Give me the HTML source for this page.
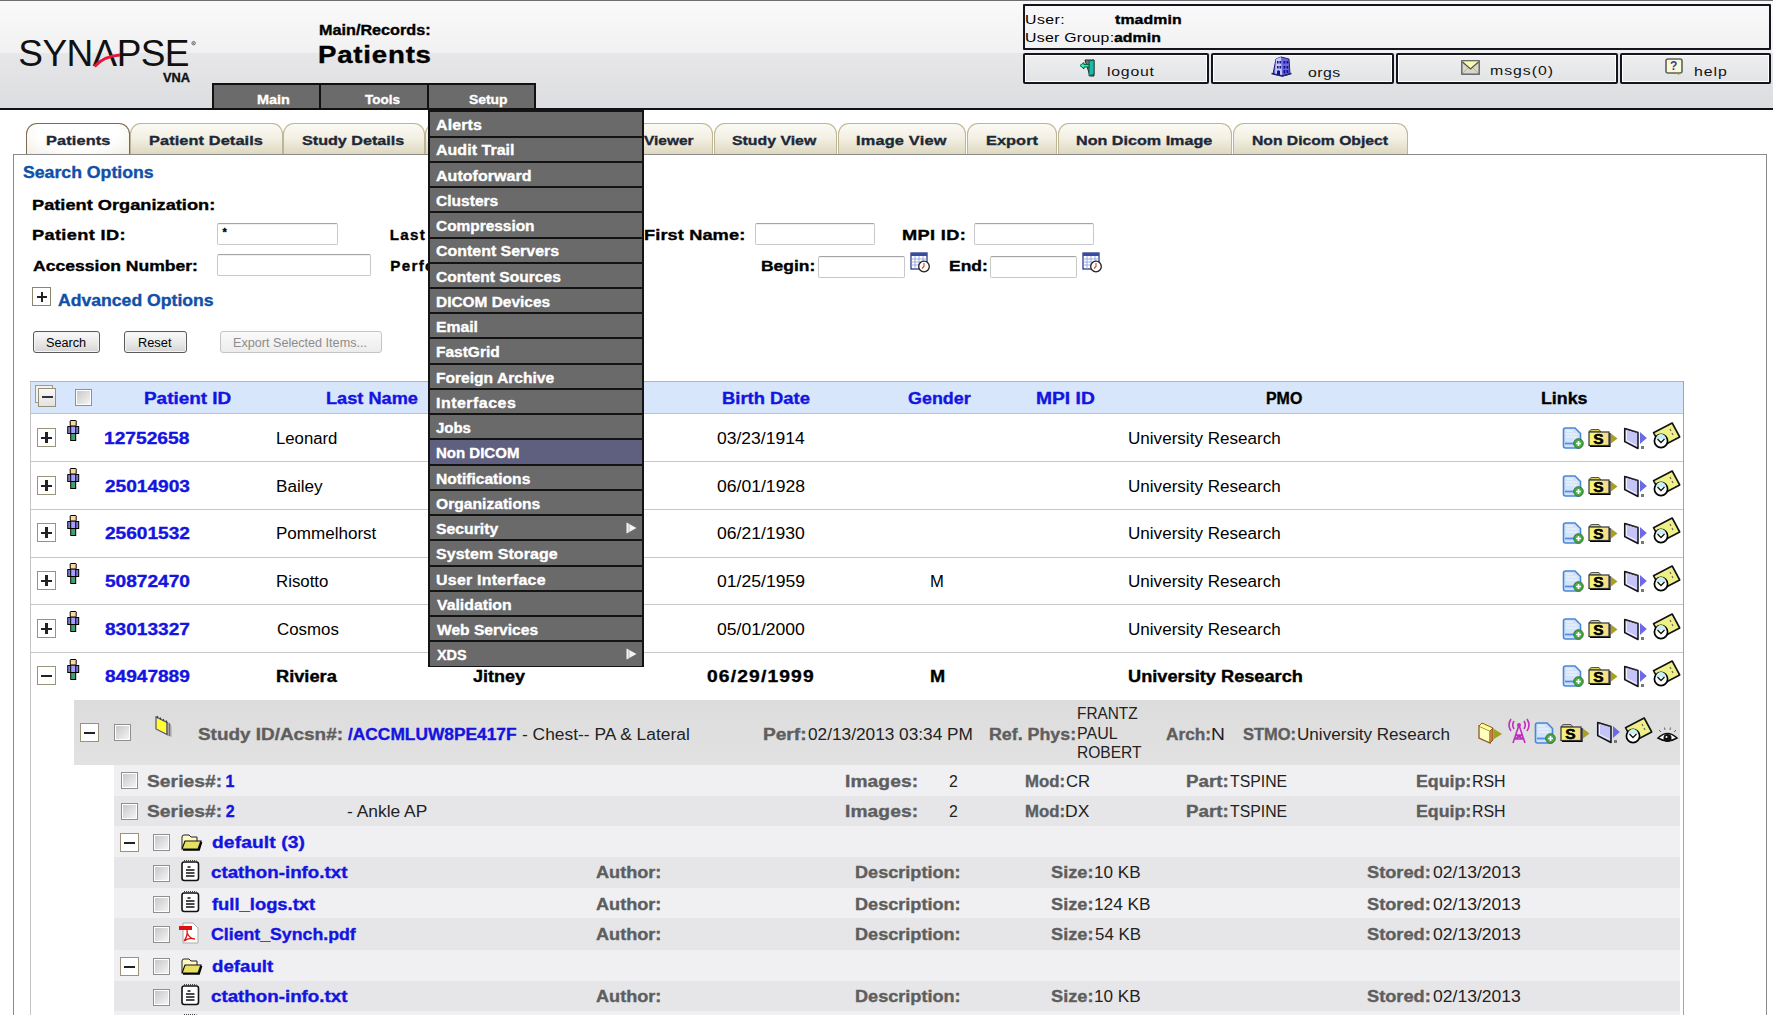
<!DOCTYPE html><html><head><meta charset="utf-8"><style>
html,body{margin:0;padding:0}
body{width:1781px;height:1015px;overflow:hidden;position:relative;background:#fff;font-family:"Liberation Sans",sans-serif}
.t{position:absolute;white-space:pre;line-height:1}
.r{position:absolute;box-sizing:border-box}
svg.r{overflow:visible}
</style></head><body>

<div class="r" style="left:0px;top:0px;width:1773px;height:109px;background:linear-gradient(#fafafa 0px,#f1f1f2 53px,#e7e7e9 53px,#dcdde0 108px)"></div>
<div class="r" style="left:0px;top:0px;width:1773px;height:1px;background:#6e6e6e"></div>
<div class="r" style="left:0px;top:108px;width:1773px;height:2px;background:#111"></div>
<svg class="r" style="left:0;top:0" width="240" height="100" viewBox="0 0 240 100"><text x="18.3" y="66.2" font-family="Liberation Sans" font-size="37" fill="#111" letter-spacing="-0.6">SYN&#923;PSE</text><path d="M94.5 66.5 Q104 56 120 55" stroke="#e8173a" stroke-width="3.2" fill="none"/><circle cx="193.6" cy="43.2" r="1.7" fill="none" stroke="#444" stroke-width="0.8"/><circle cx="193.6" cy="43.2" r="0.6" fill="#444"/></svg>
<div class="t" style="left:162.60px;top:72px;font-size:12.3px;font-weight:bold;-webkit-text-stroke:0.35px #111;color:#111;letter-spacing:0.000px;transform:scaleX(1.0449);transform-origin:0 0;">VNA</div>
<div class="t" style="left:318.91px;top:23px;font-size:14.3px;font-weight:bold;-webkit-text-stroke:0.35px #000;color:#000;letter-spacing:0.000px;transform:scaleX(1.1330);transform-origin:0 0;">Main/Records:</div>
<div class="t" style="left:318.14px;top:44px;font-size:23px;font-weight:bold;-webkit-text-stroke:0.35px #000;color:#000;letter-spacing:0.667px;transform:scaleX(1.2000);transform-origin:0 0;">Patients</div>
<div class="r" style="left:212px;top:83px;width:109px;height:27px;background:#6b6b6b;border:2px solid #111"></div>
<div class="t" style="left:256.62px;top:93px;font-size:13.2px;font-weight:bold;-webkit-text-stroke:0.35px #fff;color:#fff;letter-spacing:-0.000px;transform:scaleX(1.0958);transform-origin:0 0;">Main</div>
<div class="r" style="left:319px;top:83px;width:110px;height:27px;background:#6b6b6b;border:2px solid #111"></div>
<div class="t" style="left:364.86px;top:93px;font-size:13.2px;font-weight:bold;-webkit-text-stroke:0.35px #fff;color:#fff;letter-spacing:0.000px;transform:scaleX(1.0230);transform-origin:0 0;">Tools</div>
<div class="r" style="left:427px;top:83px;width:109px;height:27px;background:#6b6b6b;border:2px solid #111"></div>
<div class="t" style="left:468.98px;top:93px;font-size:13.2px;font-weight:bold;-webkit-text-stroke:0.35px #fff;color:#fff;letter-spacing:0.000px;transform:scaleX(1.0521);transform-origin:0 0;">Setup</div>
<div class="r" style="left:1023px;top:4px;width:748px;height:46px;border:2px solid #151520;border-radius:1px"></div>
<div class="t" style="left:1024.77px;top:13px;font-size:13.2px;color:#000;letter-spacing:0.374px;transform:scaleX(1.2000);transform-origin:0 0;">User:</div>
<div class="t" style="left:1114.80px;top:13px;font-size:13.2px;font-weight:bold;-webkit-text-stroke:0.35px #000;color:#000;letter-spacing:0.116px;transform:scaleX(1.2000);transform-origin:0 0;">tmadmin</div>
<div class="t" style="left:1024.77px;top:31px;font-size:13.2px;color:#000;letter-spacing:0.242px;transform:scaleX(1.2000);transform-origin:0 0;">User Group:</div>
<div class="t" style="left:1114.02px;top:31px;font-size:13.2px;font-weight:bold;-webkit-text-stroke:0.35px #000;color:#000;letter-spacing:0.058px;transform:scaleX(1.2000);transform-origin:0 0;">admin</div>
<div class="r" style="left:1023px;top:53px;width:186px;height:31px;border:2px solid #151520;border-radius:2px;background:linear-gradient(#efeff0,#e2e3e5);box-shadow:inset 0 0 0 1px #fff"></div>
<div class="r" style="left:1211px;top:53px;width:183px;height:31px;border:2px solid #151520;border-radius:2px;background:linear-gradient(#efeff0,#e2e3e5);box-shadow:inset 0 0 0 1px #fff"></div>
<div class="r" style="left:1396px;top:53px;width:222px;height:31px;border:2px solid #151520;border-radius:2px;background:linear-gradient(#efeff0,#e2e3e5);box-shadow:inset 0 0 0 1px #fff"></div>
<div class="r" style="left:1620px;top:53px;width:151px;height:31px;border:2px solid #151520;border-radius:2px;background:linear-gradient(#efeff0,#e2e3e5);box-shadow:inset 0 0 0 1px #fff"></div>
<div class="t" style="left:1107.13px;top:65px;font-size:13.2px;color:#111;letter-spacing:0.637px;transform:scaleX(1.2000);transform-origin:0 0;">logout</div>
<div class="t" style="left:1307.93px;top:66px;font-size:13.2px;color:#111;letter-spacing:0.366px;transform:scaleX(1.2000);transform-origin:0 0;">orgs</div>
<div class="t" style="left:1489.93px;top:64px;font-size:13.2px;color:#111;letter-spacing:0.811px;transform:scaleX(1.2000);transform-origin:0 0;">msgs(0)</div>
<div class="t" style="left:1693.89px;top:65px;font-size:13.2px;color:#111;letter-spacing:0.779px;transform:scaleX(1.2000);transform-origin:0 0;">help</div>
<div class="r" style="left:13px;top:154px;width:1754px;height:900px;border:1px solid #8a8a8a;border-bottom:none;background:#fff"></div>
<div class="r" style="left:26px;top:123px;width:104px;height:31px;border:1.5px solid #7d6a55;border-bottom:none;border-radius:11px 11px 0 0;background:radial-gradient(ellipse at 50% 30%,#ffffff 55%,#f1eee4 100%)"></div>
<div class="t" style="left:45.70px;top:134px;font-size:13.6px;font-weight:bold;-webkit-text-stroke:0.35px #1c2838;color:#1c2838;letter-spacing:0.115px;transform:scaleX(1.2000);transform-origin:0 0;">Patients</div>
<div class="r" style="left:130px;top:123px;width:153px;height:31px;border:1.5px solid #bdb593;border-bottom:none;border-radius:11px 11px 0 0;background:linear-gradient(#fbfaf4 0%,#f2efe2 50%,#ddd8bf 100%)"></div>
<div class="t" style="left:149.10px;top:134px;font-size:13.6px;font-weight:bold;-webkit-text-stroke:0.35px #1c2838;color:#1c2838;letter-spacing:0.090px;transform:scaleX(1.2000);transform-origin:0 0;">Patient Details</div>
<div class="r" style="left:283px;top:123px;width:142px;height:31px;border:1.5px solid #bdb593;border-bottom:none;border-radius:11px 11px 0 0;background:linear-gradient(#fbfaf4 0%,#f2efe2 50%,#ddd8bf 100%)"></div>
<div class="t" style="left:301.52px;top:134px;font-size:13.6px;font-weight:bold;-webkit-text-stroke:0.35px #1c2838;color:#1c2838;letter-spacing:0.000px;transform:scaleX(1.1877);transform-origin:0 0;">Study Details</div>
<div class="r" style="left:425px;top:123px;width:151px;height:31px;border:1.5px solid #bdb593;border-bottom:none;border-radius:11px 11px 0 0;background:linear-gradient(#fbfaf4 0%,#f2efe2 50%,#ddd8bf 100%)"></div>
<div class="t" style="left:444.51px;top:134px;font-size:13.6px;font-weight:bold;-webkit-text-stroke:0.35px #1c2838;color:#1c2838;letter-spacing:0.585px;transform:scaleX(1.2000);transform-origin:0 0;">Series Details</div>
<div class="r" style="left:576px;top:123px;width:137px;height:31px;border:1.5px solid #bdb593;border-bottom:none;border-radius:11px 11px 0 0;background:linear-gradient(#fbfaf4 0%,#f2efe2 50%,#ddd8bf 100%)"></div>
<div class="t" style="left:594.96px;top:134px;font-size:13.6px;font-weight:bold;-webkit-text-stroke:0.35px #1c2838;color:#1c2838;letter-spacing:0.000px;transform:scaleX(1.1370);transform-origin:0 0;">Image Viewer</div>
<div class="r" style="left:714px;top:123px;width:123px;height:31px;border:1.5px solid #bdb593;border-bottom:none;border-radius:11px 11px 0 0;background:linear-gradient(#fbfaf4 0%,#f2efe2 50%,#ddd8bf 100%)"></div>
<div class="t" style="left:732.12px;top:134px;font-size:13.6px;font-weight:bold;-webkit-text-stroke:0.35px #1c2838;color:#1c2838;letter-spacing:0.000px;transform:scaleX(1.1653);transform-origin:0 0;">Study View</div>
<div class="r" style="left:838px;top:123px;width:128px;height:31px;border:1.5px solid #bdb593;border-bottom:none;border-radius:11px 11px 0 0;background:linear-gradient(#fbfaf4 0%,#f2efe2 50%,#ddd8bf 100%)"></div>
<div class="t" style="left:855.90px;top:134px;font-size:13.6px;font-weight:bold;-webkit-text-stroke:0.35px #1c2838;color:#1c2838;letter-spacing:0.165px;transform:scaleX(1.2000);transform-origin:0 0;">Image View</div>
<div class="r" style="left:967px;top:123px;width:90px;height:31px;border:1.5px solid #bdb593;border-bottom:none;border-radius:11px 11px 0 0;background:linear-gradient(#fbfaf4 0%,#f2efe2 50%,#ddd8bf 100%)"></div>
<div class="t" style="left:985.70px;top:134px;font-size:13.6px;font-weight:bold;-webkit-text-stroke:0.35px #1c2838;color:#1c2838;letter-spacing:0.052px;transform:scaleX(1.2000);transform-origin:0 0;">Export</div>
<div class="r" style="left:1058px;top:123px;width:174px;height:31px;border:1.5px solid #bdb593;border-bottom:none;border-radius:11px 11px 0 0;background:linear-gradient(#fbfaf4 0%,#f2efe2 50%,#ddd8bf 100%)"></div>
<div class="t" style="left:1076.41px;top:134px;font-size:13.6px;font-weight:bold;-webkit-text-stroke:0.35px #1c2838;color:#1c2838;letter-spacing:0.000px;transform:scaleX(1.1869);transform-origin:0 0;">Non Dicom Image</div>
<div class="r" style="left:1233px;top:123px;width:175px;height:31px;border:1.5px solid #bdb593;border-bottom:none;border-radius:11px 11px 0 0;background:linear-gradient(#fbfaf4 0%,#f2efe2 50%,#ddd8bf 100%)"></div>
<div class="t" style="left:1251.94px;top:134px;font-size:13.6px;font-weight:bold;-webkit-text-stroke:0.35px #1c2838;color:#1c2838;letter-spacing:0.000px;transform:scaleX(1.1542);transform-origin:0 0;">Non Dicom Object</div>
<div class="t" style="left:22.97px;top:165px;font-size:16px;font-weight:bold;-webkit-text-stroke:0.35px #1050a8;color:#1050a8;letter-spacing:0.000px;transform:scaleX(1.1048);transform-origin:0 0;">Search Options</div>
<div class="t" style="left:32.07px;top:197px;font-size:15.2px;font-weight:bold;-webkit-text-stroke:0.35px #000;color:#000;letter-spacing:0.000px;transform:scaleX(1.1997);transform-origin:0 0;">Patient Organization:</div>
<div class="t" style="left:32.07px;top:227px;font-size:15.2px;font-weight:bold;-webkit-text-stroke:0.35px #000;color:#000;letter-spacing:0.281px;transform:scaleX(1.2000);transform-origin:0 0;">Patient ID:</div>
<div class="t" style="left:32.86px;top:258px;font-size:15.2px;font-weight:bold;-webkit-text-stroke:0.35px #000;color:#000;letter-spacing:0.000px;transform:scaleX(1.1565);transform-origin:0 0;">Accession Number:</div>
<div class="t" style="left:389.67px;top:227px;font-size:15.2px;font-weight:bold;-webkit-text-stroke:0.35px #000;color:#000;letter-spacing:1.300px;">Last Name:</div>
<div class="t" style="left:390.37px;top:258px;font-size:15.2px;font-weight:bold;-webkit-text-stroke:0.35px #000;color:#000;letter-spacing:1.300px;">Performed:</div>
<div class="t" style="left:644.17px;top:227px;font-size:15.2px;font-weight:bold;-webkit-text-stroke:0.35px #000;color:#000;letter-spacing:0.079px;transform:scaleX(1.2000);transform-origin:0 0;">First Name:</div>
<div class="t" style="left:902.47px;top:227px;font-size:15.2px;font-weight:bold;-webkit-text-stroke:0.35px #000;color:#000;letter-spacing:0.288px;transform:scaleX(1.2000);transform-origin:0 0;">MPI ID:</div>
<div class="t" style="left:761.32px;top:258px;font-size:15.2px;font-weight:bold;-webkit-text-stroke:0.35px #000;color:#000;letter-spacing:0.000px;transform:scaleX(1.1495);transform-origin:0 0;">Begin:</div>
<div class="t" style="left:948.82px;top:258px;font-size:15.2px;font-weight:bold;-webkit-text-stroke:0.35px #000;color:#000;letter-spacing:0.000px;transform:scaleX(1.1511);transform-origin:0 0;">End:</div>
<div class="r" style="left:217px;top:223px;width:121px;height:22px;border:1px solid #c8c8c8;border-top-color:#a4a4a4;border-radius:2px;background:#fff;box-shadow:inset 0 1px 0 #f0f0f0"></div>
<div class="t" style="left:222.47px;top:227px;font-size:11px;font-weight:bold;-webkit-text-stroke:0.35px #000;color:#000;letter-spacing:0.000px;">*</div>
<div class="r" style="left:217px;top:254px;width:154px;height:22px;border:1px solid #c8c8c8;border-top-color:#a4a4a4;border-radius:2px;background:#fff;box-shadow:inset 0 1px 0 #f0f0f0"></div>
<div class="r" style="left:755px;top:223px;width:120px;height:22px;border:1px solid #c8c8c8;border-top-color:#a4a4a4;border-radius:2px;background:#fff;box-shadow:inset 0 1px 0 #f0f0f0"></div>
<div class="r" style="left:974px;top:223px;width:120px;height:22px;border:1px solid #c8c8c8;border-top-color:#a4a4a4;border-radius:2px;background:#fff;box-shadow:inset 0 1px 0 #f0f0f0"></div>
<div class="r" style="left:818px;top:256px;width:87px;height:22px;border:1px solid #c8c8c8;border-top-color:#a4a4a4;border-radius:2px;background:#fff;box-shadow:inset 0 1px 0 #f0f0f0"></div>
<div class="r" style="left:990px;top:256px;width:87px;height:22px;border:1px solid #c8c8c8;border-top-color:#a4a4a4;border-radius:2px;background:#fff;box-shadow:inset 0 1px 0 #f0f0f0"></div>
<div class="r" style="left:32px;top:287px;width:19px;height:19px;border:1px solid #8e8570;background:#fff"></div>
<div class="r" style="left:37px;top:295.5px;width:10px;height:2.6px;background:#222"></div>
<div class="r" style="left:40.7px;top:291.8px;width:2.6px;height:10px;background:#222"></div>
<div class="t" style="left:58.16px;top:293px;font-size:16px;font-weight:bold;-webkit-text-stroke:0.35px #1050a8;color:#1050a8;letter-spacing:0.000px;transform:scaleX(1.1007);transform-origin:0 0;">Advanced Options</div>
<div class="r" style="left:33px;top:331px;width:67px;height:22px;border:1px solid #5a5a5a;border-radius:3px;background:linear-gradient(#fbfbfb,#e6e6e6 60%,#d4d4d4);box-shadow:inset 0 0 0 1px #f4f4f4"></div>
<div class="t" style="left:46.13px;top:337px;font-size:12.5px;color:#000;letter-spacing:-0.000px;transform:scaleX(1.0118);transform-origin:0 0;">Search</div>
<div class="r" style="left:124px;top:331px;width:63px;height:22px;border:1px solid #5a5a5a;border-radius:3px;background:linear-gradient(#fbfbfb,#e6e6e6 60%,#d4d4d4);box-shadow:inset 0 0 0 1px #f4f4f4"></div>
<div class="t" style="left:138.44px;top:337px;font-size:12.5px;color:#000;letter-spacing:0.000px;transform:scaleX(1.0244);transform-origin:0 0;">Reset</div>
<div class="r" style="left:220px;top:331px;width:162px;height:22px;border:1px solid #c4c4c4;border-radius:3px;background:linear-gradient(#fafafa,#ececec)"></div>
<div class="t" style="left:233.46px;top:337px;font-size:12.5px;color:#8c8c8c;letter-spacing:0.000px;transform:scaleX(1.0097);transform-origin:0 0;">Export Selected Items...</div>
<svg class="r" style="left:910px;top:252px" width="21" height="21" viewBox="0 0 21 21"><rect x="1" y="1" width="16" height="16" fill="#fff" stroke="#2a3a8a" stroke-width="1.3"/><rect x="1" y="1" width="16" height="3" fill="#3a4aa0"/><g stroke="#8a9ad8" stroke-width="0.8"><line x1="1" y1="7" x2="17" y2="7"/><line x1="1" y1="10" x2="17" y2="10"/><line x1="1" y1="13" x2="17" y2="13"/><line x1="5" y1="4" x2="5" y2="17"/><line x1="9" y1="4" x2="9" y2="17"/><line x1="13" y1="4" x2="13" y2="17"/></g><circle cx="14" cy="14.5" r="5.3" fill="#fff" stroke="#222" stroke-width="1.3"/><path d="M14 11 L14 14.5 L12 16.5" stroke="#d04020" stroke-width="1.1" fill="none"/></svg>
<svg class="r" style="left:1082px;top:252px" width="21" height="21" viewBox="0 0 21 21"><rect x="1" y="1" width="16" height="16" fill="#fff" stroke="#2a3a8a" stroke-width="1.3"/><rect x="1" y="1" width="16" height="3" fill="#3a4aa0"/><g stroke="#8a9ad8" stroke-width="0.8"><line x1="1" y1="7" x2="17" y2="7"/><line x1="1" y1="10" x2="17" y2="10"/><line x1="1" y1="13" x2="17" y2="13"/><line x1="5" y1="4" x2="5" y2="17"/><line x1="9" y1="4" x2="9" y2="17"/><line x1="13" y1="4" x2="13" y2="17"/></g><circle cx="14" cy="14.5" r="5.3" fill="#fff" stroke="#222" stroke-width="1.3"/><path d="M14 11 L14 14.5 L12 16.5" stroke="#d04020" stroke-width="1.1" fill="none"/></svg>
<div class="r" style="left:30px;top:381px;width:1654px;height:640px;border:1px solid #c4c4c4;border-top-color:#b4b4b4;border-right-color:#a4a4a4;border-bottom:none;background:#fff"></div>
<div class="r" style="left:31px;top:382px;width:1652px;height:32px;background:#d7e6fa;border-bottom:1px solid #b9c4d2"></div>
<div class="r" style="left:35px;top:385px;width:18px;height:18px;border:1px solid #a09a88;background:#f2f2ee"></div>
<div class="r" style="left:38px;top:388px;width:18px;height:19px;border:1px solid #978f78;background:linear-gradient(#f8f8f8,#e2e2e2)"></div>
<div class="r" style="left:41.5px;top:396px;width:11px;height:2.2px;background:#333"></div>
<div class="r" style="left:75px;top:389px;width:17px;height:17px;border:1px solid #8f8f8f;background:#fff"></div>
<div class="r" style="left:77px;top:391px;width:13px;height:13px;background:linear-gradient(135deg,#c8c8c8,#f4f4f4)"></div>
<div class="t" style="left:143.52px;top:391px;font-size:16px;font-weight:bold;-webkit-text-stroke:0.35px #1414e0;color:#1414e0;letter-spacing:0.000px;transform:scaleX(1.1827);transform-origin:0 0;">Patient ID</div>
<div class="t" style="left:326.37px;top:391px;font-size:16px;font-weight:bold;-webkit-text-stroke:0.35px #1414e0;color:#1414e0;letter-spacing:0.000px;transform:scaleX(1.1359);transform-origin:0 0;">Last Name</div>
<div class="t" style="left:722.46px;top:391px;font-size:16px;font-weight:bold;-webkit-text-stroke:0.35px #1414e0;color:#1414e0;letter-spacing:0.000px;transform:scaleX(1.1505);transform-origin:0 0;">Birth Date</div>
<div class="t" style="left:908.28px;top:391px;font-size:16px;font-weight:bold;-webkit-text-stroke:0.35px #1414e0;color:#1414e0;letter-spacing:0.000px;transform:scaleX(1.1186);transform-origin:0 0;">Gender</div>
<div class="t" style="left:1036.00px;top:391px;font-size:16px;font-weight:bold;-webkit-text-stroke:0.35px #1414e0;color:#1414e0;letter-spacing:0.026px;transform:scaleX(1.2000);transform-origin:0 0;">MPI ID</div>
<div class="t" style="left:1266.43px;top:391px;font-size:16px;font-weight:bold;-webkit-text-stroke:0.35px #000;color:#000;letter-spacing:0.000px;transform:scaleX(0.9948);transform-origin:0 0;">PMO</div>
<div class="t" style="left:1541.20px;top:391px;font-size:16px;font-weight:bold;-webkit-text-stroke:0.35px #000;color:#000;letter-spacing:0.000px;transform:scaleX(1.1114);transform-origin:0 0;">Links</div>
<div class="r" style="left:31px;top:461px;width:1652px;height:1px;background:#c8c8c8"></div>
<div class="r" style="left:37px;top:428px;width:19px;height:19px;border:1px solid #9b927c;background:#fff"></div>
<div class="r" style="left:41px;top:436.5px;width:11px;height:2.2px;background:#222"></div>
<div class="r" style="left:45.4px;top:432px;width:2.2px;height:11px;background:#222"></div>
<svg class="r" style="left:67px;top:419px" width="13" height="23" viewBox="0 0 13 23"><rect x="0.2" y="7" width="12" height="8" rx="0.6" fill="#000"/><rect x="1.2" y="8" width="2" height="6" fill="#8078d8"/><rect x="9.2" y="8" width="2" height="6" fill="#8078d8"/><rect x="4.2" y="7.3" width="4" height="6.7" fill="#a8a0f8"/><rect x="3.2" y="14.5" width="6" height="7.5" fill="#000"/><rect x="4.2" y="15" width="4" height="6" fill="#40a070"/><rect x="2.7" y="1" width="7" height="6.5" rx="1.5" fill="#000"/><rect x="3.7" y="2" width="5" height="4.5" fill="#f8d8a0"/></svg>
<div class="t" style="left:104.00px;top:431px;font-size:16px;font-weight:bold;-webkit-text-stroke:0.35px #1414e0;color:#1414e0;letter-spacing:-0.000px;transform:scaleX(1.1983);transform-origin:0 0;">12752658</div>
<div class="t" style="left:276.12px;top:431px;font-size:16px;color:#000;letter-spacing:0.000px;transform:scaleX(1.0461);transform-origin:0 0;">Leonard</div>
<div class="t" style="left:716.50px;top:431px;font-size:16px;color:#000;letter-spacing:0.000px;transform:scaleX(1.0949);transform-origin:0 0;">03/23/1914</div>
<div class="t" style="left:1127.98px;top:431px;font-size:16px;color:#000;letter-spacing:0.000px;transform:scaleX(1.0666);transform-origin:0 0;">University Research</div>
<svg class="r" style="left:1562px;top:427px" width="22" height="22" viewBox="0 0 22 22"><path d="M1.5 3 Q1.5 1 3.5 1 H13 L18.5 6.5 V19.5 Q18.5 21 17 21 H3.5 Q1.5 21 1.5 19 Z" fill="#d2e2f8" stroke="#4a86d8" stroke-width="1.6"/><path d="M4 4 H11 M4 7 H15 M4 10 H15" stroke="#e8f0fc" stroke-width="1.6"/><path d="M3 16.5 H13" stroke="#4a90e8" stroke-width="1.8"/><circle cx="16.5" cy="16.5" r="4.8" fill="#48a848" stroke="#2a702a" stroke-width="0.9"/><path d="M14 16.5 H19 M16.5 14 V19" stroke="#fff" stroke-width="1.7"/></svg>
<svg class="r" style="left:1588px;top:428px" width="30" height="20" viewBox="0 0 30 20"><defs><linearGradient id="sg" x1="0" x2="1"><stop offset="0.4" stop-color="#f6f27a"/><stop offset="1" stop-color="#f6d890"/></linearGradient></defs><path d="M1.5 4 Q1.5 1.5 4 1.5 H11 L13 4 Z" fill="#d8d060" stroke="#555" stroke-width="1"/><rect x="1" y="4" width="20" height="13.5" fill="url(#sg)" stroke="#333" stroke-width="1.2"/><path d="M2 18.5 H22 V5" stroke="#000" stroke-width="1.2" fill="none"/><text x="5.2" y="16.3" font-family="Liberation Sans" font-weight="bold" font-size="15.5" fill="#000" stroke="#000" stroke-width="0.6">S</text><path d="M23 5.5 L29.5 10.5 L23 15.5 Z" fill="#a8a020"/></svg>
<svg class="r" style="left:1623px;top:427px" width="25" height="23" viewBox="0 0 25 23"><path d="M1.7 1.4 L15 5.4 V21.5 L1.7 14.7 Z" fill="#c4c4f8" stroke="#111" stroke-width="1.5" stroke-linejoin="round"/><path d="M3 2 L14 5.3" stroke="#333" stroke-width="1.6" stroke-dasharray="1.5 1.5"/><path d="M3.5 4 V13.5 L13.5 18.5" stroke="#fff" stroke-width="0.8" fill="none"/><path d="M17 5 L23.8 11 L17 17 Z" fill="#6a6ae8"/><rect x="18" y="19" width="3" height="3" fill="#777"/></svg>
<svg class="r" style="left:1652px;top:421px" width="29" height="29" viewBox="0 0 29 29"><path d="M1.5 11.7 L20.2 2 L27.7 16 L9 25.7 Z" fill="#f0f088" stroke="#111" stroke-width="1.6" stroke-linejoin="round"/><path d="M18 8 L19 10 M20 12 L21 14" stroke="#666" stroke-width="1.2"/><circle cx="9" cy="20" r="6.6" fill="#fff" stroke="#000" stroke-width="1.7"/><path d="M4 18 A5 5 0 0 1 14 18 Z" fill="#c8f0f0"/><path d="M5.5 18 L9 21.5 L12.5 18" stroke="#111" stroke-width="1.3" fill="none"/></svg>
<div class="r" style="left:31px;top:509px;width:1652px;height:1px;background:#c8c8c8"></div>
<div class="r" style="left:37px;top:476px;width:19px;height:19px;border:1px solid #9b927c;background:#fff"></div>
<div class="r" style="left:41px;top:484.5px;width:11px;height:2.2px;background:#222"></div>
<div class="r" style="left:45.4px;top:480px;width:2.2px;height:11px;background:#222"></div>
<svg class="r" style="left:67px;top:467px" width="13" height="23" viewBox="0 0 13 23"><rect x="0.2" y="7" width="12" height="8" rx="0.6" fill="#000"/><rect x="1.2" y="8" width="2" height="6" fill="#8078d8"/><rect x="9.2" y="8" width="2" height="6" fill="#8078d8"/><rect x="4.2" y="7.3" width="4" height="6.7" fill="#a8a0f8"/><rect x="3.2" y="14.5" width="6" height="7.5" fill="#000"/><rect x="4.2" y="15" width="4" height="6" fill="#40a070"/><rect x="2.7" y="1" width="7" height="6.5" rx="1.5" fill="#000"/><rect x="3.7" y="2" width="5" height="4.5" fill="#f8d8a0"/></svg>
<div class="t" style="left:104.53px;top:479px;font-size:16px;font-weight:bold;-webkit-text-stroke:0.35px #1414e0;color:#1414e0;letter-spacing:0.000px;transform:scaleX(1.1922);transform-origin:0 0;">25014903</div>
<div class="t" style="left:276.09px;top:479px;font-size:16px;color:#000;letter-spacing:0.000px;transform:scaleX(1.0711);transform-origin:0 0;">Bailey</div>
<div class="t" style="left:716.50px;top:479px;font-size:16px;color:#000;letter-spacing:0.000px;transform:scaleX(1.0983);transform-origin:0 0;">06/01/1928</div>
<div class="t" style="left:1127.98px;top:479px;font-size:16px;color:#000;letter-spacing:0.000px;transform:scaleX(1.0666);transform-origin:0 0;">University Research</div>
<svg class="r" style="left:1562px;top:475px" width="22" height="22" viewBox="0 0 22 22"><path d="M1.5 3 Q1.5 1 3.5 1 H13 L18.5 6.5 V19.5 Q18.5 21 17 21 H3.5 Q1.5 21 1.5 19 Z" fill="#d2e2f8" stroke="#4a86d8" stroke-width="1.6"/><path d="M4 4 H11 M4 7 H15 M4 10 H15" stroke="#e8f0fc" stroke-width="1.6"/><path d="M3 16.5 H13" stroke="#4a90e8" stroke-width="1.8"/><circle cx="16.5" cy="16.5" r="4.8" fill="#48a848" stroke="#2a702a" stroke-width="0.9"/><path d="M14 16.5 H19 M16.5 14 V19" stroke="#fff" stroke-width="1.7"/></svg>
<svg class="r" style="left:1588px;top:476px" width="30" height="20" viewBox="0 0 30 20"><defs><linearGradient id="sg" x1="0" x2="1"><stop offset="0.4" stop-color="#f6f27a"/><stop offset="1" stop-color="#f6d890"/></linearGradient></defs><path d="M1.5 4 Q1.5 1.5 4 1.5 H11 L13 4 Z" fill="#d8d060" stroke="#555" stroke-width="1"/><rect x="1" y="4" width="20" height="13.5" fill="url(#sg)" stroke="#333" stroke-width="1.2"/><path d="M2 18.5 H22 V5" stroke="#000" stroke-width="1.2" fill="none"/><text x="5.2" y="16.3" font-family="Liberation Sans" font-weight="bold" font-size="15.5" fill="#000" stroke="#000" stroke-width="0.6">S</text><path d="M23 5.5 L29.5 10.5 L23 15.5 Z" fill="#a8a020"/></svg>
<svg class="r" style="left:1623px;top:475px" width="25" height="23" viewBox="0 0 25 23"><path d="M1.7 1.4 L15 5.4 V21.5 L1.7 14.7 Z" fill="#c4c4f8" stroke="#111" stroke-width="1.5" stroke-linejoin="round"/><path d="M3 2 L14 5.3" stroke="#333" stroke-width="1.6" stroke-dasharray="1.5 1.5"/><path d="M3.5 4 V13.5 L13.5 18.5" stroke="#fff" stroke-width="0.8" fill="none"/><path d="M17 5 L23.8 11 L17 17 Z" fill="#6a6ae8"/><rect x="18" y="19" width="3" height="3" fill="#777"/></svg>
<svg class="r" style="left:1652px;top:469px" width="29" height="29" viewBox="0 0 29 29"><path d="M1.5 11.7 L20.2 2 L27.7 16 L9 25.7 Z" fill="#f0f088" stroke="#111" stroke-width="1.6" stroke-linejoin="round"/><path d="M18 8 L19 10 M20 12 L21 14" stroke="#666" stroke-width="1.2"/><circle cx="9" cy="20" r="6.6" fill="#fff" stroke="#000" stroke-width="1.7"/><path d="M4 18 A5 5 0 0 1 14 18 Z" fill="#c8f0f0"/><path d="M5.5 18 L9 21.5 L12.5 18" stroke="#111" stroke-width="1.3" fill="none"/></svg>
<div class="r" style="left:31px;top:557px;width:1652px;height:1px;background:#c8c8c8"></div>
<div class="r" style="left:37px;top:523px;width:19px;height:19px;border:1px solid #9b927c;background:#fff"></div>
<div class="r" style="left:41px;top:531.5px;width:11px;height:2.2px;background:#222"></div>
<div class="r" style="left:45.4px;top:527px;width:2.2px;height:11px;background:#222"></div>
<svg class="r" style="left:67px;top:514px" width="13" height="23" viewBox="0 0 13 23"><rect x="0.2" y="7" width="12" height="8" rx="0.6" fill="#000"/><rect x="1.2" y="8" width="2" height="6" fill="#8078d8"/><rect x="9.2" y="8" width="2" height="6" fill="#8078d8"/><rect x="4.2" y="7.3" width="4" height="6.7" fill="#a8a0f8"/><rect x="3.2" y="14.5" width="6" height="7.5" fill="#000"/><rect x="4.2" y="15" width="4" height="6" fill="#40a070"/><rect x="2.7" y="1" width="7" height="6.5" rx="1.5" fill="#000"/><rect x="3.7" y="2" width="5" height="4.5" fill="#f8d8a0"/></svg>
<div class="t" style="left:104.53px;top:526px;font-size:16px;font-weight:bold;-webkit-text-stroke:0.35px #1414e0;color:#1414e0;letter-spacing:0.000px;transform:scaleX(1.1929);transform-origin:0 0;">25601532</div>
<div class="t" style="left:276.09px;top:526px;font-size:16px;color:#000;letter-spacing:0.000px;transform:scaleX(1.0647);transform-origin:0 0;">Pommelhorst</div>
<div class="t" style="left:716.50px;top:526px;font-size:16px;color:#000;letter-spacing:0.000px;transform:scaleX(1.0972);transform-origin:0 0;">06/21/1930</div>
<div class="t" style="left:1127.98px;top:526px;font-size:16px;color:#000;letter-spacing:0.000px;transform:scaleX(1.0666);transform-origin:0 0;">University Research</div>
<svg class="r" style="left:1562px;top:522px" width="22" height="22" viewBox="0 0 22 22"><path d="M1.5 3 Q1.5 1 3.5 1 H13 L18.5 6.5 V19.5 Q18.5 21 17 21 H3.5 Q1.5 21 1.5 19 Z" fill="#d2e2f8" stroke="#4a86d8" stroke-width="1.6"/><path d="M4 4 H11 M4 7 H15 M4 10 H15" stroke="#e8f0fc" stroke-width="1.6"/><path d="M3 16.5 H13" stroke="#4a90e8" stroke-width="1.8"/><circle cx="16.5" cy="16.5" r="4.8" fill="#48a848" stroke="#2a702a" stroke-width="0.9"/><path d="M14 16.5 H19 M16.5 14 V19" stroke="#fff" stroke-width="1.7"/></svg>
<svg class="r" style="left:1588px;top:523px" width="30" height="20" viewBox="0 0 30 20"><defs><linearGradient id="sg" x1="0" x2="1"><stop offset="0.4" stop-color="#f6f27a"/><stop offset="1" stop-color="#f6d890"/></linearGradient></defs><path d="M1.5 4 Q1.5 1.5 4 1.5 H11 L13 4 Z" fill="#d8d060" stroke="#555" stroke-width="1"/><rect x="1" y="4" width="20" height="13.5" fill="url(#sg)" stroke="#333" stroke-width="1.2"/><path d="M2 18.5 H22 V5" stroke="#000" stroke-width="1.2" fill="none"/><text x="5.2" y="16.3" font-family="Liberation Sans" font-weight="bold" font-size="15.5" fill="#000" stroke="#000" stroke-width="0.6">S</text><path d="M23 5.5 L29.5 10.5 L23 15.5 Z" fill="#a8a020"/></svg>
<svg class="r" style="left:1623px;top:522px" width="25" height="23" viewBox="0 0 25 23"><path d="M1.7 1.4 L15 5.4 V21.5 L1.7 14.7 Z" fill="#c4c4f8" stroke="#111" stroke-width="1.5" stroke-linejoin="round"/><path d="M3 2 L14 5.3" stroke="#333" stroke-width="1.6" stroke-dasharray="1.5 1.5"/><path d="M3.5 4 V13.5 L13.5 18.5" stroke="#fff" stroke-width="0.8" fill="none"/><path d="M17 5 L23.8 11 L17 17 Z" fill="#6a6ae8"/><rect x="18" y="19" width="3" height="3" fill="#777"/></svg>
<svg class="r" style="left:1652px;top:516px" width="29" height="29" viewBox="0 0 29 29"><path d="M1.5 11.7 L20.2 2 L27.7 16 L9 25.7 Z" fill="#f0f088" stroke="#111" stroke-width="1.6" stroke-linejoin="round"/><path d="M18 8 L19 10 M20 12 L21 14" stroke="#666" stroke-width="1.2"/><circle cx="9" cy="20" r="6.6" fill="#fff" stroke="#000" stroke-width="1.7"/><path d="M4 18 A5 5 0 0 1 14 18 Z" fill="#c8f0f0"/><path d="M5.5 18 L9 21.5 L12.5 18" stroke="#111" stroke-width="1.3" fill="none"/></svg>
<div class="r" style="left:31px;top:604px;width:1652px;height:1px;background:#c8c8c8"></div>
<div class="r" style="left:37px;top:571px;width:19px;height:19px;border:1px solid #9b927c;background:#fff"></div>
<div class="r" style="left:41px;top:579.5px;width:11px;height:2.2px;background:#222"></div>
<div class="r" style="left:45.4px;top:575px;width:2.2px;height:11px;background:#222"></div>
<svg class="r" style="left:67px;top:562px" width="13" height="23" viewBox="0 0 13 23"><rect x="0.2" y="7" width="12" height="8" rx="0.6" fill="#000"/><rect x="1.2" y="8" width="2" height="6" fill="#8078d8"/><rect x="9.2" y="8" width="2" height="6" fill="#8078d8"/><rect x="4.2" y="7.3" width="4" height="6.7" fill="#a8a0f8"/><rect x="3.2" y="14.5" width="6" height="7.5" fill="#000"/><rect x="4.2" y="15" width="4" height="6" fill="#40a070"/><rect x="2.7" y="1" width="7" height="6.5" rx="1.5" fill="#000"/><rect x="3.7" y="2" width="5" height="4.5" fill="#f8d8a0"/></svg>
<div class="t" style="left:104.63px;top:574px;font-size:16px;font-weight:bold;-webkit-text-stroke:0.35px #1414e0;color:#1414e0;letter-spacing:0.000px;transform:scaleX(1.1922);transform-origin:0 0;">50872470</div>
<div class="t" style="left:276.11px;top:574px;font-size:16px;color:#000;letter-spacing:0.000px;transform:scaleX(1.0514);transform-origin:0 0;">Risotto</div>
<div class="t" style="left:716.50px;top:574px;font-size:16px;color:#000;letter-spacing:0.000px;transform:scaleX(1.0988);transform-origin:0 0;">01/25/1959</div>
<div class="t" style="left:929.53px;top:574px;font-size:16px;color:#000;letter-spacing:0.000px;transform:scaleX(1.0393);transform-origin:0 0;">M</div>
<div class="t" style="left:1127.98px;top:574px;font-size:16px;color:#000;letter-spacing:0.000px;transform:scaleX(1.0666);transform-origin:0 0;">University Research</div>
<svg class="r" style="left:1562px;top:570px" width="22" height="22" viewBox="0 0 22 22"><path d="M1.5 3 Q1.5 1 3.5 1 H13 L18.5 6.5 V19.5 Q18.5 21 17 21 H3.5 Q1.5 21 1.5 19 Z" fill="#d2e2f8" stroke="#4a86d8" stroke-width="1.6"/><path d="M4 4 H11 M4 7 H15 M4 10 H15" stroke="#e8f0fc" stroke-width="1.6"/><path d="M3 16.5 H13" stroke="#4a90e8" stroke-width="1.8"/><circle cx="16.5" cy="16.5" r="4.8" fill="#48a848" stroke="#2a702a" stroke-width="0.9"/><path d="M14 16.5 H19 M16.5 14 V19" stroke="#fff" stroke-width="1.7"/></svg>
<svg class="r" style="left:1588px;top:571px" width="30" height="20" viewBox="0 0 30 20"><defs><linearGradient id="sg" x1="0" x2="1"><stop offset="0.4" stop-color="#f6f27a"/><stop offset="1" stop-color="#f6d890"/></linearGradient></defs><path d="M1.5 4 Q1.5 1.5 4 1.5 H11 L13 4 Z" fill="#d8d060" stroke="#555" stroke-width="1"/><rect x="1" y="4" width="20" height="13.5" fill="url(#sg)" stroke="#333" stroke-width="1.2"/><path d="M2 18.5 H22 V5" stroke="#000" stroke-width="1.2" fill="none"/><text x="5.2" y="16.3" font-family="Liberation Sans" font-weight="bold" font-size="15.5" fill="#000" stroke="#000" stroke-width="0.6">S</text><path d="M23 5.5 L29.5 10.5 L23 15.5 Z" fill="#a8a020"/></svg>
<svg class="r" style="left:1623px;top:570px" width="25" height="23" viewBox="0 0 25 23"><path d="M1.7 1.4 L15 5.4 V21.5 L1.7 14.7 Z" fill="#c4c4f8" stroke="#111" stroke-width="1.5" stroke-linejoin="round"/><path d="M3 2 L14 5.3" stroke="#333" stroke-width="1.6" stroke-dasharray="1.5 1.5"/><path d="M3.5 4 V13.5 L13.5 18.5" stroke="#fff" stroke-width="0.8" fill="none"/><path d="M17 5 L23.8 11 L17 17 Z" fill="#6a6ae8"/><rect x="18" y="19" width="3" height="3" fill="#777"/></svg>
<svg class="r" style="left:1652px;top:564px" width="29" height="29" viewBox="0 0 29 29"><path d="M1.5 11.7 L20.2 2 L27.7 16 L9 25.7 Z" fill="#f0f088" stroke="#111" stroke-width="1.6" stroke-linejoin="round"/><path d="M18 8 L19 10 M20 12 L21 14" stroke="#666" stroke-width="1.2"/><circle cx="9" cy="20" r="6.6" fill="#fff" stroke="#000" stroke-width="1.7"/><path d="M4 18 A5 5 0 0 1 14 18 Z" fill="#c8f0f0"/><path d="M5.5 18 L9 21.5 L12.5 18" stroke="#111" stroke-width="1.3" fill="none"/></svg>
<div class="r" style="left:31px;top:652px;width:1652px;height:1px;background:#c8c8c8"></div>
<div class="r" style="left:37px;top:619px;width:19px;height:19px;border:1px solid #9b927c;background:#fff"></div>
<div class="r" style="left:41px;top:627.5px;width:11px;height:2.2px;background:#222"></div>
<div class="r" style="left:45.4px;top:623px;width:2.2px;height:11px;background:#222"></div>
<svg class="r" style="left:67px;top:610px" width="13" height="23" viewBox="0 0 13 23"><rect x="0.2" y="7" width="12" height="8" rx="0.6" fill="#000"/><rect x="1.2" y="8" width="2" height="6" fill="#8078d8"/><rect x="9.2" y="8" width="2" height="6" fill="#8078d8"/><rect x="4.2" y="7.3" width="4" height="6.7" fill="#a8a0f8"/><rect x="3.2" y="14.5" width="6" height="7.5" fill="#000"/><rect x="4.2" y="15" width="4" height="6" fill="#40a070"/><rect x="2.7" y="1" width="7" height="6.5" rx="1.5" fill="#000"/><rect x="3.7" y="2" width="5" height="4.5" fill="#f8d8a0"/></svg>
<div class="t" style="left:104.58px;top:622px;font-size:16px;font-weight:bold;-webkit-text-stroke:0.35px #1414e0;color:#1414e0;letter-spacing:-0.000px;transform:scaleX(1.1935);transform-origin:0 0;">83013327</div>
<div class="t" style="left:276.66px;top:622px;font-size:16px;color:#000;letter-spacing:-0.000px;transform:scaleX(1.0537);transform-origin:0 0;">Cosmos</div>
<div class="t" style="left:716.50px;top:622px;font-size:16px;color:#000;letter-spacing:0.000px;transform:scaleX(1.0972);transform-origin:0 0;">05/01/2000</div>
<div class="t" style="left:1127.98px;top:622px;font-size:16px;color:#000;letter-spacing:0.000px;transform:scaleX(1.0666);transform-origin:0 0;">University Research</div>
<svg class="r" style="left:1562px;top:618px" width="22" height="22" viewBox="0 0 22 22"><path d="M1.5 3 Q1.5 1 3.5 1 H13 L18.5 6.5 V19.5 Q18.5 21 17 21 H3.5 Q1.5 21 1.5 19 Z" fill="#d2e2f8" stroke="#4a86d8" stroke-width="1.6"/><path d="M4 4 H11 M4 7 H15 M4 10 H15" stroke="#e8f0fc" stroke-width="1.6"/><path d="M3 16.5 H13" stroke="#4a90e8" stroke-width="1.8"/><circle cx="16.5" cy="16.5" r="4.8" fill="#48a848" stroke="#2a702a" stroke-width="0.9"/><path d="M14 16.5 H19 M16.5 14 V19" stroke="#fff" stroke-width="1.7"/></svg>
<svg class="r" style="left:1588px;top:619px" width="30" height="20" viewBox="0 0 30 20"><defs><linearGradient id="sg" x1="0" x2="1"><stop offset="0.4" stop-color="#f6f27a"/><stop offset="1" stop-color="#f6d890"/></linearGradient></defs><path d="M1.5 4 Q1.5 1.5 4 1.5 H11 L13 4 Z" fill="#d8d060" stroke="#555" stroke-width="1"/><rect x="1" y="4" width="20" height="13.5" fill="url(#sg)" stroke="#333" stroke-width="1.2"/><path d="M2 18.5 H22 V5" stroke="#000" stroke-width="1.2" fill="none"/><text x="5.2" y="16.3" font-family="Liberation Sans" font-weight="bold" font-size="15.5" fill="#000" stroke="#000" stroke-width="0.6">S</text><path d="M23 5.5 L29.5 10.5 L23 15.5 Z" fill="#a8a020"/></svg>
<svg class="r" style="left:1623px;top:618px" width="25" height="23" viewBox="0 0 25 23"><path d="M1.7 1.4 L15 5.4 V21.5 L1.7 14.7 Z" fill="#c4c4f8" stroke="#111" stroke-width="1.5" stroke-linejoin="round"/><path d="M3 2 L14 5.3" stroke="#333" stroke-width="1.6" stroke-dasharray="1.5 1.5"/><path d="M3.5 4 V13.5 L13.5 18.5" stroke="#fff" stroke-width="0.8" fill="none"/><path d="M17 5 L23.8 11 L17 17 Z" fill="#6a6ae8"/><rect x="18" y="19" width="3" height="3" fill="#777"/></svg>
<svg class="r" style="left:1652px;top:612px" width="29" height="29" viewBox="0 0 29 29"><path d="M1.5 11.7 L20.2 2 L27.7 16 L9 25.7 Z" fill="#f0f088" stroke="#111" stroke-width="1.6" stroke-linejoin="round"/><path d="M18 8 L19 10 M20 12 L21 14" stroke="#666" stroke-width="1.2"/><circle cx="9" cy="20" r="6.6" fill="#fff" stroke="#000" stroke-width="1.7"/><path d="M4 18 A5 5 0 0 1 14 18 Z" fill="#c8f0f0"/><path d="M5.5 18 L9 21.5 L12.5 18" stroke="#111" stroke-width="1.3" fill="none"/></svg>
<div class="r" style="left:37px;top:666px;width:19px;height:19px;border:1px solid #9b927c;background:#fff"></div>
<div class="r" style="left:41px;top:674.5px;width:11px;height:2.2px;background:#222"></div>
<svg class="r" style="left:67px;top:658px" width="13" height="23" viewBox="0 0 13 23"><rect x="0.2" y="7" width="12" height="8" rx="0.6" fill="#000"/><rect x="1.2" y="8" width="2" height="6" fill="#8078d8"/><rect x="9.2" y="8" width="2" height="6" fill="#8078d8"/><rect x="4.2" y="7.3" width="4" height="6.7" fill="#a8a0f8"/><rect x="3.2" y="14.5" width="6" height="7.5" fill="#000"/><rect x="4.2" y="15" width="4" height="6" fill="#40a070"/><rect x="2.7" y="1" width="7" height="6.5" rx="1.5" fill="#000"/><rect x="3.7" y="2" width="5" height="4.5" fill="#f8d8a0"/></svg>
<div class="t" style="left:104.58px;top:669px;font-size:16px;font-weight:bold;-webkit-text-stroke:0.35px #1414e0;color:#1414e0;letter-spacing:0.000px;transform:scaleX(1.1915);transform-origin:0 0;">84947889</div>
<div class="t" style="left:276.27px;top:669px;font-size:16px;font-weight:bold;-webkit-text-stroke:0.35px #000;color:#000;letter-spacing:0.000px;transform:scaleX(1.1393);transform-origin:0 0;">Riviera</div>
<div class="t" style="left:473.33px;top:669px;font-size:16px;font-weight:bold;-webkit-text-stroke:0.35px #000;color:#000;letter-spacing:0.000px;transform:scaleX(1.1237);transform-origin:0 0;">Jitney</div>
<div class="t" style="left:707.23px;top:669px;font-size:16px;font-weight:bold;-webkit-text-stroke:0.35px #000;color:#000;letter-spacing:0.976px;transform:scaleX(1.2000);transform-origin:0 0;">06/29/1999</div>
<div class="t" style="left:929.68px;top:669px;font-size:16px;font-weight:bold;-webkit-text-stroke:0.35px #000;color:#000;letter-spacing:0.000px;transform:scaleX(1.1339);transform-origin:0 0;">M</div>
<div class="t" style="left:1128.21px;top:669px;font-size:16px;font-weight:bold;-webkit-text-stroke:0.35px #000;color:#000;letter-spacing:0.000px;transform:scaleX(1.1368);transform-origin:0 0;">University Research</div>
<svg class="r" style="left:1562px;top:665px" width="22" height="22" viewBox="0 0 22 22"><path d="M1.5 3 Q1.5 1 3.5 1 H13 L18.5 6.5 V19.5 Q18.5 21 17 21 H3.5 Q1.5 21 1.5 19 Z" fill="#d2e2f8" stroke="#4a86d8" stroke-width="1.6"/><path d="M4 4 H11 M4 7 H15 M4 10 H15" stroke="#e8f0fc" stroke-width="1.6"/><path d="M3 16.5 H13" stroke="#4a90e8" stroke-width="1.8"/><circle cx="16.5" cy="16.5" r="4.8" fill="#48a848" stroke="#2a702a" stroke-width="0.9"/><path d="M14 16.5 H19 M16.5 14 V19" stroke="#fff" stroke-width="1.7"/></svg>
<svg class="r" style="left:1588px;top:666px" width="30" height="20" viewBox="0 0 30 20"><defs><linearGradient id="sg" x1="0" x2="1"><stop offset="0.4" stop-color="#f6f27a"/><stop offset="1" stop-color="#f6d890"/></linearGradient></defs><path d="M1.5 4 Q1.5 1.5 4 1.5 H11 L13 4 Z" fill="#d8d060" stroke="#555" stroke-width="1"/><rect x="1" y="4" width="20" height="13.5" fill="url(#sg)" stroke="#333" stroke-width="1.2"/><path d="M2 18.5 H22 V5" stroke="#000" stroke-width="1.2" fill="none"/><text x="5.2" y="16.3" font-family="Liberation Sans" font-weight="bold" font-size="15.5" fill="#000" stroke="#000" stroke-width="0.6">S</text><path d="M23 5.5 L29.5 10.5 L23 15.5 Z" fill="#a8a020"/></svg>
<svg class="r" style="left:1623px;top:665px" width="25" height="23" viewBox="0 0 25 23"><path d="M1.7 1.4 L15 5.4 V21.5 L1.7 14.7 Z" fill="#c4c4f8" stroke="#111" stroke-width="1.5" stroke-linejoin="round"/><path d="M3 2 L14 5.3" stroke="#333" stroke-width="1.6" stroke-dasharray="1.5 1.5"/><path d="M3.5 4 V13.5 L13.5 18.5" stroke="#fff" stroke-width="0.8" fill="none"/><path d="M17 5 L23.8 11 L17 17 Z" fill="#6a6ae8"/><rect x="18" y="19" width="3" height="3" fill="#777"/></svg>
<svg class="r" style="left:1652px;top:659px" width="29" height="29" viewBox="0 0 29 29"><path d="M1.5 11.7 L20.2 2 L27.7 16 L9 25.7 Z" fill="#f0f088" stroke="#111" stroke-width="1.6" stroke-linejoin="round"/><path d="M18 8 L19 10 M20 12 L21 14" stroke="#666" stroke-width="1.2"/><circle cx="9" cy="20" r="6.6" fill="#fff" stroke="#000" stroke-width="1.7"/><path d="M4 18 A5 5 0 0 1 14 18 Z" fill="#c8f0f0"/><path d="M5.5 18 L9 21.5 L12.5 18" stroke="#111" stroke-width="1.3" fill="none"/></svg>
<div class="r" style="left:74px;top:700px;width:1606px;height:65px;background:linear-gradient(#dcdcdc,#e2e2e2)"></div>
<div class="r" style="left:80px;top:723px;width:19px;height:19px;border:1px solid #9b927c;background:#fff"></div>
<div class="r" style="left:84px;top:731.5px;width:11px;height:2.2px;background:#222"></div>
<div class="r" style="left:114px;top:724px;width:17px;height:17px;border:1px solid #8f8f8f;background:#fff"></div>
<div class="r" style="left:116px;top:726px;width:13px;height:13px;background:linear-gradient(135deg,#c8c8c8,#f4f4f4)"></div>
<svg class="r" style="left:150px;top:712px" width="26" height="26" viewBox="0 0 26 26"><path d="M6 5 L17 10.5 V22.5 L6 17 Z" fill="#ffff30" stroke="#5a4a8a" stroke-width="1.2"/><path d="M17 10.5 L20 12 V24 L17 22.5 Z" fill="#888" stroke="#555" stroke-width="0.8"/><path d="M18.5 11 V24" stroke="#bbb" stroke-width="0.6"/><path d="M7 4 L8 6 M10 5.5 L11 7.5 M13 7 L14 9 M16 8.5 L17 10.5" stroke="#333" stroke-width="1.2"/><path d="M21 14 V25" stroke="#aaa" stroke-width="1"/></svg>
<div class="t" style="left:198.33px;top:727px;font-size:16px;font-weight:bold;-webkit-text-stroke:0.35px #5e5e5e;color:#5e5e5e;letter-spacing:0.000px;transform:scaleX(1.1816);transform-origin:0 0;">Study ID/Acsn#:</div>
<div class="t" style="left:348.03px;top:727px;font-size:16px;font-weight:bold;-webkit-text-stroke:0.35px #1414e0;color:#1414e0;letter-spacing:0.000px;transform:scaleX(1.0837);transform-origin:0 0;">/ACCMLUW8PE417F</div>
<div class="t" style="left:521.62px;top:727px;font-size:16px;color:#222;letter-spacing:0.000px;transform:scaleX(1.0862);transform-origin:0 0;">- Chest-- PA &amp; Lateral</div>
<div class="t" style="left:763.31px;top:727px;font-size:16px;font-weight:bold;-webkit-text-stroke:0.35px #5e5e5e;color:#5e5e5e;letter-spacing:0.000px;transform:scaleX(1.1939);transform-origin:0 0;">Perf:</div>
<div class="t" style="left:807.71px;top:727px;font-size:16px;color:#222;letter-spacing:0.000px;transform:scaleX(1.0779);transform-origin:0 0;">02/13/2013 03:34 PM</div>
<div class="t" style="left:989.10px;top:727px;font-size:16px;font-weight:bold;-webkit-text-stroke:0.35px #5e5e5e;color:#5e5e5e;letter-spacing:0.000px;transform:scaleX(1.1132);transform-origin:0 0;">Ref. Phys:</div>
<div class="t" style="left:1076.63px;top:706px;font-size:16px;color:#222;letter-spacing:0.000px;transform:scaleX(0.9612);transform-origin:0 0;">FRANTZ</div>
<div class="t" style="left:1076.58px;top:726px;font-size:16px;color:#222;letter-spacing:0.000px;transform:scaleX(0.9985);transform-origin:0 0;">PAUL</div>
<div class="t" style="left:1076.62px;top:745px;font-size:16px;color:#222;letter-spacing:0.000px;transform:scaleX(0.9725);transform-origin:0 0;">ROBERT</div>
<div class="t" style="left:1165.57px;top:727px;font-size:16px;font-weight:bold;-webkit-text-stroke:0.35px #5e5e5e;color:#5e5e5e;letter-spacing:0.000px;transform:scaleX(1.0793);transform-origin:0 0;">Arch:</div>
<div class="t" style="left:1211.02px;top:727px;font-size:16px;color:#222;letter-spacing:0.497px;transform:scaleX(1.2000);transform-origin:0 0;">N</div>
<div class="t" style="left:1242.51px;top:727px;font-size:16px;font-weight:bold;-webkit-text-stroke:0.35px #5e5e5e;color:#5e5e5e;letter-spacing:0.000px;transform:scaleX(1.0299);transform-origin:0 0;">STMO:</div>
<div class="t" style="left:1296.68px;top:727px;font-size:16px;color:#222;letter-spacing:0.000px;transform:scaleX(1.0680);transform-origin:0 0;">University Research</div>
<svg class="r" style="left:1478px;top:722px" width="25" height="23" viewBox="0 0 25 23"><path d="M1 4 L12 9 V21 L1 16 Z" fill="#ffffc0" stroke="#8a5a20" stroke-width="1.3"/><path d="M1 4 L4 1 L15 6 L12 9" fill="#ffff90" stroke="#8a5a20" stroke-width="1"/><path d="M12 9 L15 6 V18 L12 21" fill="#c08040" stroke="#8a5a20" stroke-width="1"/><path d="M16 7 L24 12 L16 17 Z" fill="#a0a020"/></svg>
<svg class="r" style="left:1508px;top:717px" width="22" height="27" viewBox="0 0 22 27"><g stroke="#c030c0" stroke-width="1.6" fill="none"><path d="M11 8 L5 26 M11 8 L17 26 M7.5 18 L14.5 18 M6.5 22 L15.5 22 M8 18 L15 22 M14 18 L7 22"/><path d="M6 4 Q3.5 8 6 12 M16 4 Q18.5 8 16 12 M3 2 Q-1 8 3 14 M19 2 Q23 8 19 14"/></g><circle cx="11" cy="8" r="2" fill="#c030c0"/></svg>
<svg class="r" style="left:1534px;top:722px" width="22" height="22" viewBox="0 0 22 22"><path d="M1.5 3 Q1.5 1 3.5 1 H13 L18.5 6.5 V19.5 Q18.5 21 17 21 H3.5 Q1.5 21 1.5 19 Z" fill="#d2e2f8" stroke="#4a86d8" stroke-width="1.6"/><path d="M4 4 H11 M4 7 H15 M4 10 H15" stroke="#e8f0fc" stroke-width="1.6"/><path d="M3 16.5 H13" stroke="#4a90e8" stroke-width="1.8"/><circle cx="16.5" cy="16.5" r="4.8" fill="#48a848" stroke="#2a702a" stroke-width="0.9"/><path d="M14 16.5 H19 M16.5 14 V19" stroke="#fff" stroke-width="1.7"/></svg>
<svg class="r" style="left:1560px;top:723px" width="30" height="20" viewBox="0 0 30 20"><defs><linearGradient id="sg" x1="0" x2="1"><stop offset="0.4" stop-color="#f6f27a"/><stop offset="1" stop-color="#f6d890"/></linearGradient></defs><path d="M1.5 4 Q1.5 1.5 4 1.5 H11 L13 4 Z" fill="#d8d060" stroke="#555" stroke-width="1"/><rect x="1" y="4" width="20" height="13.5" fill="url(#sg)" stroke="#333" stroke-width="1.2"/><path d="M2 18.5 H22 V5" stroke="#000" stroke-width="1.2" fill="none"/><text x="5.2" y="16.3" font-family="Liberation Sans" font-weight="bold" font-size="15.5" fill="#000" stroke="#000" stroke-width="0.6">S</text><path d="M23 5.5 L29.5 10.5 L23 15.5 Z" fill="#a8a020"/></svg>
<svg class="r" style="left:1596px;top:721px" width="25" height="23" viewBox="0 0 25 23"><path d="M1.7 1.4 L15 5.4 V21.5 L1.7 14.7 Z" fill="#c4c4f8" stroke="#111" stroke-width="1.5" stroke-linejoin="round"/><path d="M3 2 L14 5.3" stroke="#333" stroke-width="1.6" stroke-dasharray="1.5 1.5"/><path d="M3.5 4 V13.5 L13.5 18.5" stroke="#fff" stroke-width="0.8" fill="none"/><path d="M17 5 L23.8 11 L17 17 Z" fill="#6a6ae8"/><rect x="18" y="19" width="3" height="3" fill="#777"/></svg>
<svg class="r" style="left:1624px;top:716px" width="29" height="29" viewBox="0 0 29 29"><path d="M1.5 11.7 L20.2 2 L27.7 16 L9 25.7 Z" fill="#f0f088" stroke="#111" stroke-width="1.6" stroke-linejoin="round"/><path d="M18 8 L19 10 M20 12 L21 14" stroke="#666" stroke-width="1.2"/><circle cx="9" cy="20" r="6.6" fill="#fff" stroke="#000" stroke-width="1.7"/><path d="M4 18 A5 5 0 0 1 14 18 Z" fill="#c8f0f0"/><path d="M5.5 18 L9 21.5 L12.5 18" stroke="#111" stroke-width="1.3" fill="none"/></svg>
<svg class="r" style="left:1657px;top:727px" width="21" height="17" viewBox="0 0 21 17"><path d="M1 11 Q10.5 2 20 11 Q10.5 17 1 11 Z" fill="#fff" stroke="#111" stroke-width="1.6"/><circle cx="10.5" cy="11" r="4" fill="#111"/><circle cx="9.5" cy="10" r="1" fill="#fff"/><path d="M4 5 L2 3 M8 3 L7.5 0.5 M13 3 L13.5 0.5 M17 5 L19 3" stroke="#666" stroke-width="1"/></svg>
<div class="r" style="left:114px;top:765px;width:1566px;height:31px;background:#f0f0f2"></div>
<div class="r" style="left:114px;top:796px;width:1566px;height:30px;background:#e6e6e8"></div>
<div class="r" style="left:121px;top:772px;width:17px;height:17px;border:1px solid #8f8f8f;background:#fff"></div>
<div class="r" style="left:123px;top:774px;width:13px;height:13px;background:linear-gradient(135deg,#c8c8c8,#f4f4f4)"></div>
<div class="t" style="left:147.22px;top:774px;font-size:16px;font-weight:bold;-webkit-text-stroke:0.35px #5e5e5e;color:#5e5e5e;letter-spacing:0.049px;transform:scaleX(1.2000);transform-origin:0 0;">Series#:</div>
<div class="t" style="left:225.40px;top:774px;font-size:16px;font-weight:bold;-webkit-text-stroke:0.35px #1414e0;color:#1414e0;letter-spacing:0.000px;">1</div>
<div class="t" style="left:844.70px;top:774px;font-size:16px;font-weight:bold;-webkit-text-stroke:0.35px #5e5e5e;color:#5e5e5e;letter-spacing:0.076px;transform:scaleX(1.2000);transform-origin:0 0;">Images:</div>
<div class="t" style="left:949.21px;top:774px;font-size:16px;color:#222;letter-spacing:0.000px;transform:scaleX(0.9890);transform-origin:0 0;">2</div>
<div class="t" style="left:1024.57px;top:774px;font-size:16px;font-weight:bold;-webkit-text-stroke:0.35px #5e5e5e;color:#5e5e5e;letter-spacing:0.000px;transform:scaleX(1.0478);transform-origin:0 0;">Mod:</div>
<div class="t" style="left:1065.77px;top:774px;font-size:16px;color:#222;letter-spacing:0.000px;transform:scaleX(1.0436);transform-origin:0 0;">CR</div>
<div class="t" style="left:1186.14px;top:774px;font-size:16px;font-weight:bold;-webkit-text-stroke:0.35px #5e5e5e;color:#5e5e5e;letter-spacing:0.000px;transform:scaleX(1.1702);transform-origin:0 0;">Part:</div>
<div class="t" style="left:1230.24px;top:774px;font-size:16px;color:#222;letter-spacing:0.000px;transform:scaleX(0.9884);transform-origin:0 0;">TSPINE</div>
<div class="t" style="left:1416.40px;top:774px;font-size:16px;font-weight:bold;-webkit-text-stroke:0.35px #5e5e5e;color:#5e5e5e;letter-spacing:0.000px;transform:scaleX(1.1111);transform-origin:0 0;">Equip:</div>
<div class="t" style="left:1471.69px;top:774px;font-size:16px;color:#222;letter-spacing:0.000px;transform:scaleX(0.9949);transform-origin:0 0;">RSH</div>
<div class="r" style="left:121px;top:803px;width:17px;height:17px;border:1px solid #8f8f8f;background:#fff"></div>
<div class="r" style="left:123px;top:805px;width:13px;height:13px;background:linear-gradient(135deg,#c8c8c8,#f4f4f4)"></div>
<div class="t" style="left:147.22px;top:804px;font-size:16px;font-weight:bold;-webkit-text-stroke:0.35px #5e5e5e;color:#5e5e5e;letter-spacing:0.049px;transform:scaleX(1.2000);transform-origin:0 0;">Series#:</div>
<div class="t" style="left:225.84px;top:804px;font-size:16px;font-weight:bold;-webkit-text-stroke:0.35px #1414e0;color:#1414e0;letter-spacing:0.000px;">2</div>
<div class="t" style="left:347.42px;top:804px;font-size:16px;color:#222;letter-spacing:0.000px;transform:scaleX(1.0874);transform-origin:0 0;">- Ankle AP</div>
<div class="t" style="left:844.70px;top:804px;font-size:16px;font-weight:bold;-webkit-text-stroke:0.35px #5e5e5e;color:#5e5e5e;letter-spacing:0.076px;transform:scaleX(1.2000);transform-origin:0 0;">Images:</div>
<div class="t" style="left:949.21px;top:804px;font-size:16px;color:#222;letter-spacing:0.000px;transform:scaleX(0.9890);transform-origin:0 0;">2</div>
<div class="t" style="left:1024.57px;top:804px;font-size:16px;font-weight:bold;-webkit-text-stroke:0.35px #5e5e5e;color:#5e5e5e;letter-spacing:0.000px;transform:scaleX(1.0478);transform-origin:0 0;">Mod:</div>
<div class="t" style="left:1065.16px;top:804px;font-size:16px;color:#222;letter-spacing:0.000px;transform:scaleX(1.0944);transform-origin:0 0;">DX</div>
<div class="t" style="left:1186.14px;top:804px;font-size:16px;font-weight:bold;-webkit-text-stroke:0.35px #5e5e5e;color:#5e5e5e;letter-spacing:0.000px;transform:scaleX(1.1702);transform-origin:0 0;">Part:</div>
<div class="t" style="left:1230.24px;top:804px;font-size:16px;color:#222;letter-spacing:0.000px;transform:scaleX(0.9884);transform-origin:0 0;">TSPINE</div>
<div class="t" style="left:1416.40px;top:804px;font-size:16px;font-weight:bold;-webkit-text-stroke:0.35px #5e5e5e;color:#5e5e5e;letter-spacing:0.000px;transform:scaleX(1.1111);transform-origin:0 0;">Equip:</div>
<div class="t" style="left:1471.69px;top:804px;font-size:16px;color:#222;letter-spacing:0.000px;transform:scaleX(0.9949);transform-origin:0 0;">RSH</div>
<div class="r" style="left:114px;top:826px;width:1566px;height:31px;background:#f0f0f2"></div>
<div class="r" style="left:120px;top:833px;width:19px;height:19px;border:1px solid #9b927c;background:#fff"></div>
<div class="r" style="left:124px;top:841.5px;width:11px;height:2.2px;background:#222"></div>
<div class="r" style="left:153px;top:834px;width:17px;height:17px;border:1px solid #8f8f8f;background:#fff"></div>
<div class="r" style="left:155px;top:836px;width:13px;height:13px;background:linear-gradient(135deg,#c8c8c8,#f4f4f4)"></div>
<svg class="r" style="left:180px;top:833px" width="22" height="18" viewBox="0 0 22 18"><path d="M2 4 Q2 2 4 2 H9 L11 4 H17 V15 H2 Z" fill="#fff8c0" stroke="#222" stroke-width="1"/><path d="M2 16 L5 8 H21 L18 16 Z" fill="#e8e060" stroke="#111" stroke-width="1.2"/><path d="M3 16.8 H19 L21.5 9" stroke="#000" stroke-width="1.8" fill="none"/></svg>
<div class="t" style="left:211.83px;top:835px;font-size:16px;font-weight:bold;-webkit-text-stroke:0.35px #1414e0;color:#1414e0;letter-spacing:0.100px;transform:scaleX(1.2000);transform-origin:0 0;">default (3)</div>
<div class="r" style="left:114px;top:857px;width:1566px;height:31px;background:#e6e6e8"></div>
<div class="r" style="left:153px;top:865px;width:17px;height:17px;border:1px solid #8f8f8f;background:#fff"></div>
<div class="r" style="left:155px;top:867px;width:13px;height:13px;background:linear-gradient(135deg,#c8c8c8,#f4f4f4)"></div>
<svg class="r" style="left:181px;top:858.5px" width="19" height="23" viewBox="0 0 19 23"><rect x="1" y="3" width="16.5" height="18.5" rx="2.2" fill="#fff" stroke="#111" stroke-width="1.6"/><path d="M3 1.8 H15.5" stroke="#444" stroke-width="1.8" stroke-dasharray="1 1"/><path d="M6.5 8 H9.5 M5 11 H13.5 M5 14 H13.5 M5 17 H13.5" stroke="#111" stroke-width="1.5"/></svg>
<div class="t" style="left:211.45px;top:865px;font-size:16px;font-weight:bold;-webkit-text-stroke:0.35px #1414e0;color:#1414e0;letter-spacing:0.000px;transform:scaleX(1.1717);transform-origin:0 0;">ctathon-info.txt</div>
<div class="t" style="left:595.75px;top:865px;font-size:16px;font-weight:bold;-webkit-text-stroke:0.35px #5e5e5e;color:#5e5e5e;letter-spacing:0.000px;transform:scaleX(1.1318);transform-origin:0 0;">Author:</div>
<div class="t" style="left:855.18px;top:865px;font-size:16px;font-weight:bold;-webkit-text-stroke:0.35px #5e5e5e;color:#5e5e5e;letter-spacing:0.000px;transform:scaleX(1.1310);transform-origin:0 0;">Description:</div>
<div class="t" style="left:1051.25px;top:865px;font-size:16px;font-weight:bold;-webkit-text-stroke:0.35px #5e5e5e;color:#5e5e5e;letter-spacing:0.000px;transform:scaleX(1.1382);transform-origin:0 0;">Size:</div>
<div class="t" style="left:1094.32px;top:865px;font-size:16px;color:#222;letter-spacing:0.000px;transform:scaleX(1.0683);transform-origin:0 0;">10 KB</div>
<div class="t" style="left:1366.95px;top:865px;font-size:16px;font-weight:bold;-webkit-text-stroke:0.35px #5e5e5e;color:#5e5e5e;letter-spacing:0.000px;transform:scaleX(1.1389);transform-origin:0 0;">Stored:</div>
<div class="t" style="left:1432.60px;top:865px;font-size:16px;color:#222;letter-spacing:0.000px;transform:scaleX(1.0970);transform-origin:0 0;">02/13/2013</div>
<div class="r" style="left:114px;top:888px;width:1566px;height:30px;background:#f0f0f2"></div>
<div class="r" style="left:153px;top:896px;width:17px;height:17px;border:1px solid #8f8f8f;background:#fff"></div>
<div class="r" style="left:155px;top:898px;width:13px;height:13px;background:linear-gradient(135deg,#c8c8c8,#f4f4f4)"></div>
<svg class="r" style="left:181px;top:889.5px" width="19" height="23" viewBox="0 0 19 23"><rect x="1" y="3" width="16.5" height="18.5" rx="2.2" fill="#fff" stroke="#111" stroke-width="1.6"/><path d="M3 1.8 H15.5" stroke="#444" stroke-width="1.8" stroke-dasharray="1 1"/><path d="M6.5 8 H9.5 M5 11 H13.5 M5 14 H13.5 M5 17 H13.5" stroke="#111" stroke-width="1.5"/></svg>
<div class="t" style="left:211.88px;top:897px;font-size:16px;font-weight:bold;-webkit-text-stroke:0.35px #1414e0;color:#1414e0;letter-spacing:0.000px;transform:scaleX(1.1492);transform-origin:0 0;">full_logs.txt</div>
<div class="t" style="left:595.75px;top:897px;font-size:16px;font-weight:bold;-webkit-text-stroke:0.35px #5e5e5e;color:#5e5e5e;letter-spacing:0.000px;transform:scaleX(1.1318);transform-origin:0 0;">Author:</div>
<div class="t" style="left:855.18px;top:897px;font-size:16px;font-weight:bold;-webkit-text-stroke:0.35px #5e5e5e;color:#5e5e5e;letter-spacing:0.000px;transform:scaleX(1.1310);transform-origin:0 0;">Description:</div>
<div class="t" style="left:1051.25px;top:897px;font-size:16px;font-weight:bold;-webkit-text-stroke:0.35px #5e5e5e;color:#5e5e5e;letter-spacing:0.000px;transform:scaleX(1.1382);transform-origin:0 0;">Size:</div>
<div class="t" style="left:1094.31px;top:897px;font-size:16px;color:#222;letter-spacing:-0.000px;transform:scaleX(1.0785);transform-origin:0 0;">124 KB</div>
<div class="t" style="left:1366.95px;top:897px;font-size:16px;font-weight:bold;-webkit-text-stroke:0.35px #5e5e5e;color:#5e5e5e;letter-spacing:0.000px;transform:scaleX(1.1389);transform-origin:0 0;">Stored:</div>
<div class="t" style="left:1432.60px;top:897px;font-size:16px;color:#222;letter-spacing:0.000px;transform:scaleX(1.0970);transform-origin:0 0;">02/13/2013</div>
<div class="r" style="left:114px;top:918px;width:1566px;height:32px;background:#e6e6e8"></div>
<div class="r" style="left:153px;top:926px;width:17px;height:17px;border:1px solid #8f8f8f;background:#fff"></div>
<div class="r" style="left:155px;top:928px;width:13px;height:13px;background:linear-gradient(135deg,#c8c8c8,#f4f4f4)"></div>
<svg class="r" style="left:179px;top:922px" width="20" height="22" viewBox="0 0 20 22"><path d="M4 1 H14 L19 6 V21 H4 Z" fill="#fff" stroke="#aaa" stroke-width="1"/><path d="M0 4 H13 V8 H0 Z" fill="#e01010"/><path d="M8 8 Q9 14 5 19 M8 11 Q11 17 16 17 M5 19 Q10 15 16 17" stroke="#e01010" stroke-width="1.3" fill="none"/></svg>
<div class="t" style="left:211.49px;top:927px;font-size:16px;font-weight:bold;-webkit-text-stroke:0.35px #1414e0;color:#1414e0;letter-spacing:0.000px;transform:scaleX(1.1070);transform-origin:0 0;">Client_Synch.pdf</div>
<div class="t" style="left:595.75px;top:927px;font-size:16px;font-weight:bold;-webkit-text-stroke:0.35px #5e5e5e;color:#5e5e5e;letter-spacing:0.000px;transform:scaleX(1.1318);transform-origin:0 0;">Author:</div>
<div class="t" style="left:855.18px;top:927px;font-size:16px;font-weight:bold;-webkit-text-stroke:0.35px #5e5e5e;color:#5e5e5e;letter-spacing:0.000px;transform:scaleX(1.1310);transform-origin:0 0;">Description:</div>
<div class="t" style="left:1051.25px;top:927px;font-size:16px;font-weight:bold;-webkit-text-stroke:0.35px #5e5e5e;color:#5e5e5e;letter-spacing:0.000px;transform:scaleX(1.1382);transform-origin:0 0;">Size:</div>
<div class="t" style="left:1094.93px;top:927px;font-size:16px;color:#222;letter-spacing:-0.000px;transform:scaleX(1.0541);transform-origin:0 0;">54 KB</div>
<div class="t" style="left:1366.95px;top:927px;font-size:16px;font-weight:bold;-webkit-text-stroke:0.35px #5e5e5e;color:#5e5e5e;letter-spacing:0.000px;transform:scaleX(1.1389);transform-origin:0 0;">Stored:</div>
<div class="t" style="left:1432.60px;top:927px;font-size:16px;color:#222;letter-spacing:0.000px;transform:scaleX(1.0970);transform-origin:0 0;">02/13/2013</div>
<div class="r" style="left:114px;top:950px;width:1566px;height:31px;background:#f0f0f2"></div>
<div class="r" style="left:120px;top:957px;width:19px;height:19px;border:1px solid #9b927c;background:#fff"></div>
<div class="r" style="left:124px;top:965.5px;width:11px;height:2.2px;background:#222"></div>
<div class="r" style="left:153px;top:958px;width:17px;height:17px;border:1px solid #8f8f8f;background:#fff"></div>
<div class="r" style="left:155px;top:960px;width:13px;height:13px;background:linear-gradient(135deg,#c8c8c8,#f4f4f4)"></div>
<svg class="r" style="left:180px;top:957px" width="22" height="18" viewBox="0 0 22 18"><path d="M2 4 Q2 2 4 2 H9 L11 4 H17 V15 H2 Z" fill="#fff8c0" stroke="#222" stroke-width="1"/><path d="M2 16 L5 8 H21 L18 16 Z" fill="#e8e060" stroke="#111" stroke-width="1.2"/><path d="M3 16.8 H19 L21.5 9" stroke="#000" stroke-width="1.8" fill="none"/></svg>
<div class="t" style="left:211.85px;top:959px;font-size:16px;font-weight:bold;-webkit-text-stroke:0.35px #1414e0;color:#1414e0;letter-spacing:0.000px;transform:scaleX(1.1667);transform-origin:0 0;">default</div>
<div class="r" style="left:114px;top:981px;width:1566px;height:30px;background:#e6e6e8"></div>
<div class="r" style="left:153px;top:989px;width:17px;height:17px;border:1px solid #8f8f8f;background:#fff"></div>
<div class="r" style="left:155px;top:991px;width:13px;height:13px;background:linear-gradient(135deg,#c8c8c8,#f4f4f4)"></div>
<svg class="r" style="left:181px;top:982.5px" width="19" height="23" viewBox="0 0 19 23"><rect x="1" y="3" width="16.5" height="18.5" rx="2.2" fill="#fff" stroke="#111" stroke-width="1.6"/><path d="M3 1.8 H15.5" stroke="#444" stroke-width="1.8" stroke-dasharray="1 1"/><path d="M6.5 8 H9.5 M5 11 H13.5 M5 14 H13.5 M5 17 H13.5" stroke="#111" stroke-width="1.5"/></svg>
<div class="t" style="left:211.45px;top:989px;font-size:16px;font-weight:bold;-webkit-text-stroke:0.35px #1414e0;color:#1414e0;letter-spacing:0.000px;transform:scaleX(1.1717);transform-origin:0 0;">ctathon-info.txt</div>
<div class="t" style="left:595.75px;top:989px;font-size:16px;font-weight:bold;-webkit-text-stroke:0.35px #5e5e5e;color:#5e5e5e;letter-spacing:0.000px;transform:scaleX(1.1318);transform-origin:0 0;">Author:</div>
<div class="t" style="left:855.18px;top:989px;font-size:16px;font-weight:bold;-webkit-text-stroke:0.35px #5e5e5e;color:#5e5e5e;letter-spacing:0.000px;transform:scaleX(1.1310);transform-origin:0 0;">Description:</div>
<div class="t" style="left:1051.25px;top:989px;font-size:16px;font-weight:bold;-webkit-text-stroke:0.35px #5e5e5e;color:#5e5e5e;letter-spacing:0.000px;transform:scaleX(1.1382);transform-origin:0 0;">Size:</div>
<div class="t" style="left:1094.32px;top:989px;font-size:16px;color:#222;letter-spacing:0.000px;transform:scaleX(1.0683);transform-origin:0 0;">10 KB</div>
<div class="t" style="left:1366.95px;top:989px;font-size:16px;font-weight:bold;-webkit-text-stroke:0.35px #5e5e5e;color:#5e5e5e;letter-spacing:0.000px;transform:scaleX(1.1389);transform-origin:0 0;">Stored:</div>
<div class="t" style="left:1432.60px;top:989px;font-size:16px;color:#222;letter-spacing:0.000px;transform:scaleX(1.0970);transform-origin:0 0;">02/13/2013</div>
<div class="r" style="left:114px;top:1011px;width:1566px;height:29px;background:#f0f0f2"></div>
<div class="r" style="left:153px;top:1019px;width:17px;height:17px;border:1px solid #8f8f8f;background:#fff"></div>
<div class="r" style="left:155px;top:1021px;width:13px;height:13px;background:linear-gradient(135deg,#c8c8c8,#f4f4f4)"></div>
<svg class="r" style="left:181px;top:1012.5px" width="19" height="23" viewBox="0 0 19 23"><rect x="1" y="3" width="16.5" height="18.5" rx="2.2" fill="#fff" stroke="#111" stroke-width="1.6"/><path d="M3 1.8 H15.5" stroke="#444" stroke-width="1.8" stroke-dasharray="1 1"/><path d="M6.5 8 H9.5 M5 11 H13.5 M5 14 H13.5 M5 17 H13.5" stroke="#111" stroke-width="1.5"/></svg>
<div class="r" style="left:428px;top:110px;width:216px;height:557px;background:#141414"></div>
<div class="r" style="left:430px;top:112px;width:212px;height:24px;background:#6a6a6a"></div>
<div class="t" style="left:436.30px;top:118px;font-size:14.5px;font-weight:bold;-webkit-text-stroke:0.35px #fff;color:#fff;letter-spacing:0.102px;transform:scaleX(1.1000);transform-origin:0 0;">Alerts</div>
<div class="r" style="left:430px;top:138px;width:212px;height:23px;background:#6a6a6a"></div>
<div class="t" style="left:436.30px;top:143px;font-size:14.5px;font-weight:bold;-webkit-text-stroke:0.35px #fff;color:#fff;letter-spacing:0.047px;transform:scaleX(1.1000);transform-origin:0 0;">Audit Trail</div>
<div class="r" style="left:430px;top:163px;width:212px;height:23px;background:#6a6a6a"></div>
<div class="t" style="left:436.30px;top:169px;font-size:14.5px;font-weight:bold;-webkit-text-stroke:0.35px #fff;color:#fff;letter-spacing:0.059px;transform:scaleX(1.1000);transform-origin:0 0;">Autoforward</div>
<div class="r" style="left:430px;top:188px;width:212px;height:23px;background:#6a6a6a"></div>
<div class="t" style="left:436.08px;top:194px;font-size:14.5px;font-weight:bold;-webkit-text-stroke:0.35px #fff;color:#fff;letter-spacing:0.000px;transform:scaleX(1.0732);transform-origin:0 0;">Clusters</div>
<div class="r" style="left:430px;top:213px;width:212px;height:24px;background:#6a6a6a"></div>
<div class="t" style="left:436.08px;top:219px;font-size:14.5px;font-weight:bold;-webkit-text-stroke:0.35px #fff;color:#fff;letter-spacing:-0.000px;transform:scaleX(1.0635);transform-origin:0 0;">Compression</div>
<div class="r" style="left:430px;top:239px;width:212px;height:23px;background:#6a6a6a"></div>
<div class="t" style="left:436.06px;top:244px;font-size:14.5px;font-weight:bold;-webkit-text-stroke:0.35px #fff;color:#fff;letter-spacing:-0.000px;transform:scaleX(1.0991);transform-origin:0 0;">Content Servers</div>
<div class="r" style="left:430px;top:264px;width:212px;height:23px;background:#6a6a6a"></div>
<div class="t" style="left:436.08px;top:270px;font-size:14.5px;font-weight:bold;-webkit-text-stroke:0.35px #fff;color:#fff;letter-spacing:0.000px;transform:scaleX(1.0763);transform-origin:0 0;">Content Sources</div>
<div class="r" style="left:430px;top:289px;width:212px;height:23px;background:#6a6a6a"></div>
<div class="t" style="left:435.66px;top:295px;font-size:14.5px;font-weight:bold;-webkit-text-stroke:0.35px #fff;color:#fff;letter-spacing:-0.000px;transform:scaleX(1.0644);transform-origin:0 0;">DICOM Devices</div>
<div class="r" style="left:430px;top:314px;width:212px;height:23px;background:#6a6a6a"></div>
<div class="t" style="left:435.64px;top:320px;font-size:14.5px;font-weight:bold;-webkit-text-stroke:0.35px #fff;color:#fff;letter-spacing:0.000px;transform:scaleX(1.0849);transform-origin:0 0;">Email</div>
<div class="r" style="left:430px;top:339px;width:212px;height:24px;background:#6a6a6a"></div>
<div class="t" style="left:435.65px;top:345px;font-size:14.5px;font-weight:bold;-webkit-text-stroke:0.35px #fff;color:#fff;letter-spacing:0.000px;transform:scaleX(1.0681);transform-origin:0 0;">FastGrid</div>
<div class="r" style="left:430px;top:365px;width:212px;height:23px;background:#6a6a6a"></div>
<div class="t" style="left:435.65px;top:371px;font-size:14.5px;font-weight:bold;-webkit-text-stroke:0.35px #fff;color:#fff;letter-spacing:0.000px;transform:scaleX(1.0748);transform-origin:0 0;">Foreign Archive</div>
<div class="r" style="left:430px;top:390px;width:212px;height:23px;background:#6a6a6a"></div>
<div class="t" style="left:435.62px;top:396px;font-size:14.5px;font-weight:bold;-webkit-text-stroke:0.35px #fff;color:#fff;letter-spacing:0.454px;transform:scaleX(1.1000);transform-origin:0 0;">Interfaces</div>
<div class="r" style="left:430px;top:415px;width:212px;height:23px;background:#6a6a6a"></div>
<div class="t" style="left:436.48px;top:421px;font-size:14.5px;font-weight:bold;-webkit-text-stroke:0.35px #fff;color:#fff;letter-spacing:0.000px;transform:scaleX(1.0326);transform-origin:0 0;">Jobs</div>
<div class="r" style="left:430px;top:440px;width:212px;height:24px;background:#5f5f80"></div>
<div class="t" style="left:435.69px;top:446px;font-size:14.5px;font-weight:bold;-webkit-text-stroke:0.35px #fff;color:#fff;letter-spacing:0.000px;transform:scaleX(1.0353);transform-origin:0 0;">Non DICOM</div>
<div class="r" style="left:430px;top:466px;width:212px;height:23px;background:#6a6a6a"></div>
<div class="t" style="left:435.65px;top:472px;font-size:14.5px;font-weight:bold;-webkit-text-stroke:0.35px #fff;color:#fff;letter-spacing:0.000px;transform:scaleX(1.0738);transform-origin:0 0;">Notifications</div>
<div class="r" style="left:430px;top:491px;width:212px;height:23px;background:#6a6a6a"></div>
<div class="t" style="left:436.07px;top:497px;font-size:14.5px;font-weight:bold;-webkit-text-stroke:0.35px #fff;color:#fff;letter-spacing:0.000px;transform:scaleX(1.0783);transform-origin:0 0;">Organizations</div>
<div class="r" style="left:430px;top:516px;width:212px;height:23px;background:#6a6a6a"></div>
<div class="t" style="left:436.23px;top:522px;font-size:14.5px;font-weight:bold;-webkit-text-stroke:0.35px #fff;color:#fff;letter-spacing:0.000px;transform:scaleX(1.0865);transform-origin:0 0;">Security</div>
<svg class="r" style="left:626px;top:522px" width="12" height="12" viewBox="0 0 12 12"><path d="M0.5 0.5 L10.5 6 L0.5 11.5 Z" fill="#f4f4f4"/><path d="M3 1.5 V10.5" stroke="#aaa" stroke-width="0.8"/></svg>
<div class="r" style="left:430px;top:541px;width:212px;height:24px;background:#6a6a6a"></div>
<div class="t" style="left:436.22px;top:547px;font-size:14.5px;font-weight:bold;-webkit-text-stroke:0.35px #fff;color:#fff;letter-spacing:0.074px;transform:scaleX(1.1000);transform-origin:0 0;">System Storage</div>
<div class="r" style="left:430px;top:567px;width:212px;height:23px;background:#6a6a6a"></div>
<div class="t" style="left:435.74px;top:573px;font-size:14.5px;font-weight:bold;-webkit-text-stroke:0.35px #fff;color:#fff;letter-spacing:0.223px;transform:scaleX(1.1000);transform-origin:0 0;">User Interface</div>
<div class="r" style="left:430px;top:592px;width:212px;height:23px;background:#6a6a6a"></div>
<div class="t" style="left:436.58px;top:598px;font-size:14.5px;font-weight:bold;-webkit-text-stroke:0.35px #fff;color:#fff;letter-spacing:0.000px;transform:scaleX(1.0904);transform-origin:0 0;">Validation</div>
<div class="r" style="left:430px;top:617px;width:212px;height:23px;background:#6a6a6a"></div>
<div class="t" style="left:436.70px;top:623px;font-size:14.5px;font-weight:bold;-webkit-text-stroke:0.35px #fff;color:#fff;letter-spacing:-0.000px;transform:scaleX(1.0754);transform-origin:0 0;">Web Services</div>
<div class="r" style="left:430px;top:642px;width:212px;height:24px;background:#6a6a6a"></div>
<div class="t" style="left:436.56px;top:648px;font-size:14.5px;font-weight:bold;-webkit-text-stroke:0.35px #fff;color:#fff;letter-spacing:0.000px;transform:scaleX(0.9928);transform-origin:0 0;">XDS</div>
<svg class="r" style="left:626px;top:648px" width="12" height="12" viewBox="0 0 12 12"><path d="M0.5 0.5 L10.5 6 L0.5 11.5 Z" fill="#f4f4f4"/><path d="M3 1.5 V10.5" stroke="#aaa" stroke-width="0.8"/></svg>
<svg class="r" style="left:1079px;top:59px" width="17" height="18" viewBox="0 0 17 18"><path d="M6 1 H15 V17 L11 17 Z" fill="#807870" stroke="#222" stroke-width="1"/><path d="M10 2 L15 1 V15 L10 17 Z" fill="#20b8a8" stroke="#0a5a50" stroke-width="1"/><path d="M1 6.5 L5 3.5 V5.5 H10 V8 H5 V10 Z" fill="#30e8d8" stroke="#063" stroke-width="1"/></svg>
<svg class="r" style="left:1271px;top:56px" width="21" height="21" viewBox="0 0 21 21"><path d="M2 18 L5 3 L10 1 L18 3 L19 18 L12 20 Z" fill="#6a6ad0" stroke="#20207a" stroke-width="1"/><path d="M5 3 L10 1 L11 19 L4 18 Z" fill="#c8c8f8"/><g fill="#10109a"><rect x="6" y="5" width="1.6" height="2.5"/><rect x="8.5" y="5" width="1.6" height="2.5"/><rect x="6" y="10" width="1.6" height="2.5"/><rect x="8.5" y="10" width="1.6" height="2.5"/><rect x="12.5" y="5" width="1.8" height="2.5"/><rect x="15.5" y="5" width="1.8" height="2.5"/><rect x="12.5" y="10" width="1.8" height="2.5"/><rect x="15.5" y="10" width="1.8" height="2.5"/><rect x="12.5" y="14" width="1.8" height="3.5"/><rect x="15.5" y="14" width="1.8" height="3"/><path d="M6 19 V15 Q7.5 13.5 9 15 V19 Z"/></g><path d="M0.5 17.5 L11 20 L20.5 17.5" stroke="#202070" stroke-width="1.3" fill="none"/></svg>
<svg class="r" style="left:1461px;top:60px" width="19" height="15" viewBox="0 0 19 15"><rect x="0.8" y="0.8" width="17.4" height="13.4" fill="#d8d8c8" stroke="#606060" stroke-width="1.4"/><path d="M1.5 1.5 L9.5 9 L17.5 1.5 Z" fill="#f8f8b0"/><path d="M1.5 2 L9.5 9 L17.5 2" stroke="#505050" stroke-width="1.2" fill="none"/><path d="M2 13 L7 8 M17 13 L12 8" stroke="#aaa" stroke-width="0.8"/></svg>
<svg class="r" style="left:1665px;top:58px" width="19" height="17" viewBox="0 0 19 17"><rect x="1" y="1" width="16" height="14" rx="2" fill="#fafad8" stroke="#606060" stroke-width="1.6"/><text x="5" y="12" font-family="Liberation Sans" font-weight="bold" font-size="12" fill="#3a3a9a">?</text><path d="M12 15 L14 16.5" stroke="#9a9a40" stroke-width="1.4"/></svg>
</body></html>
